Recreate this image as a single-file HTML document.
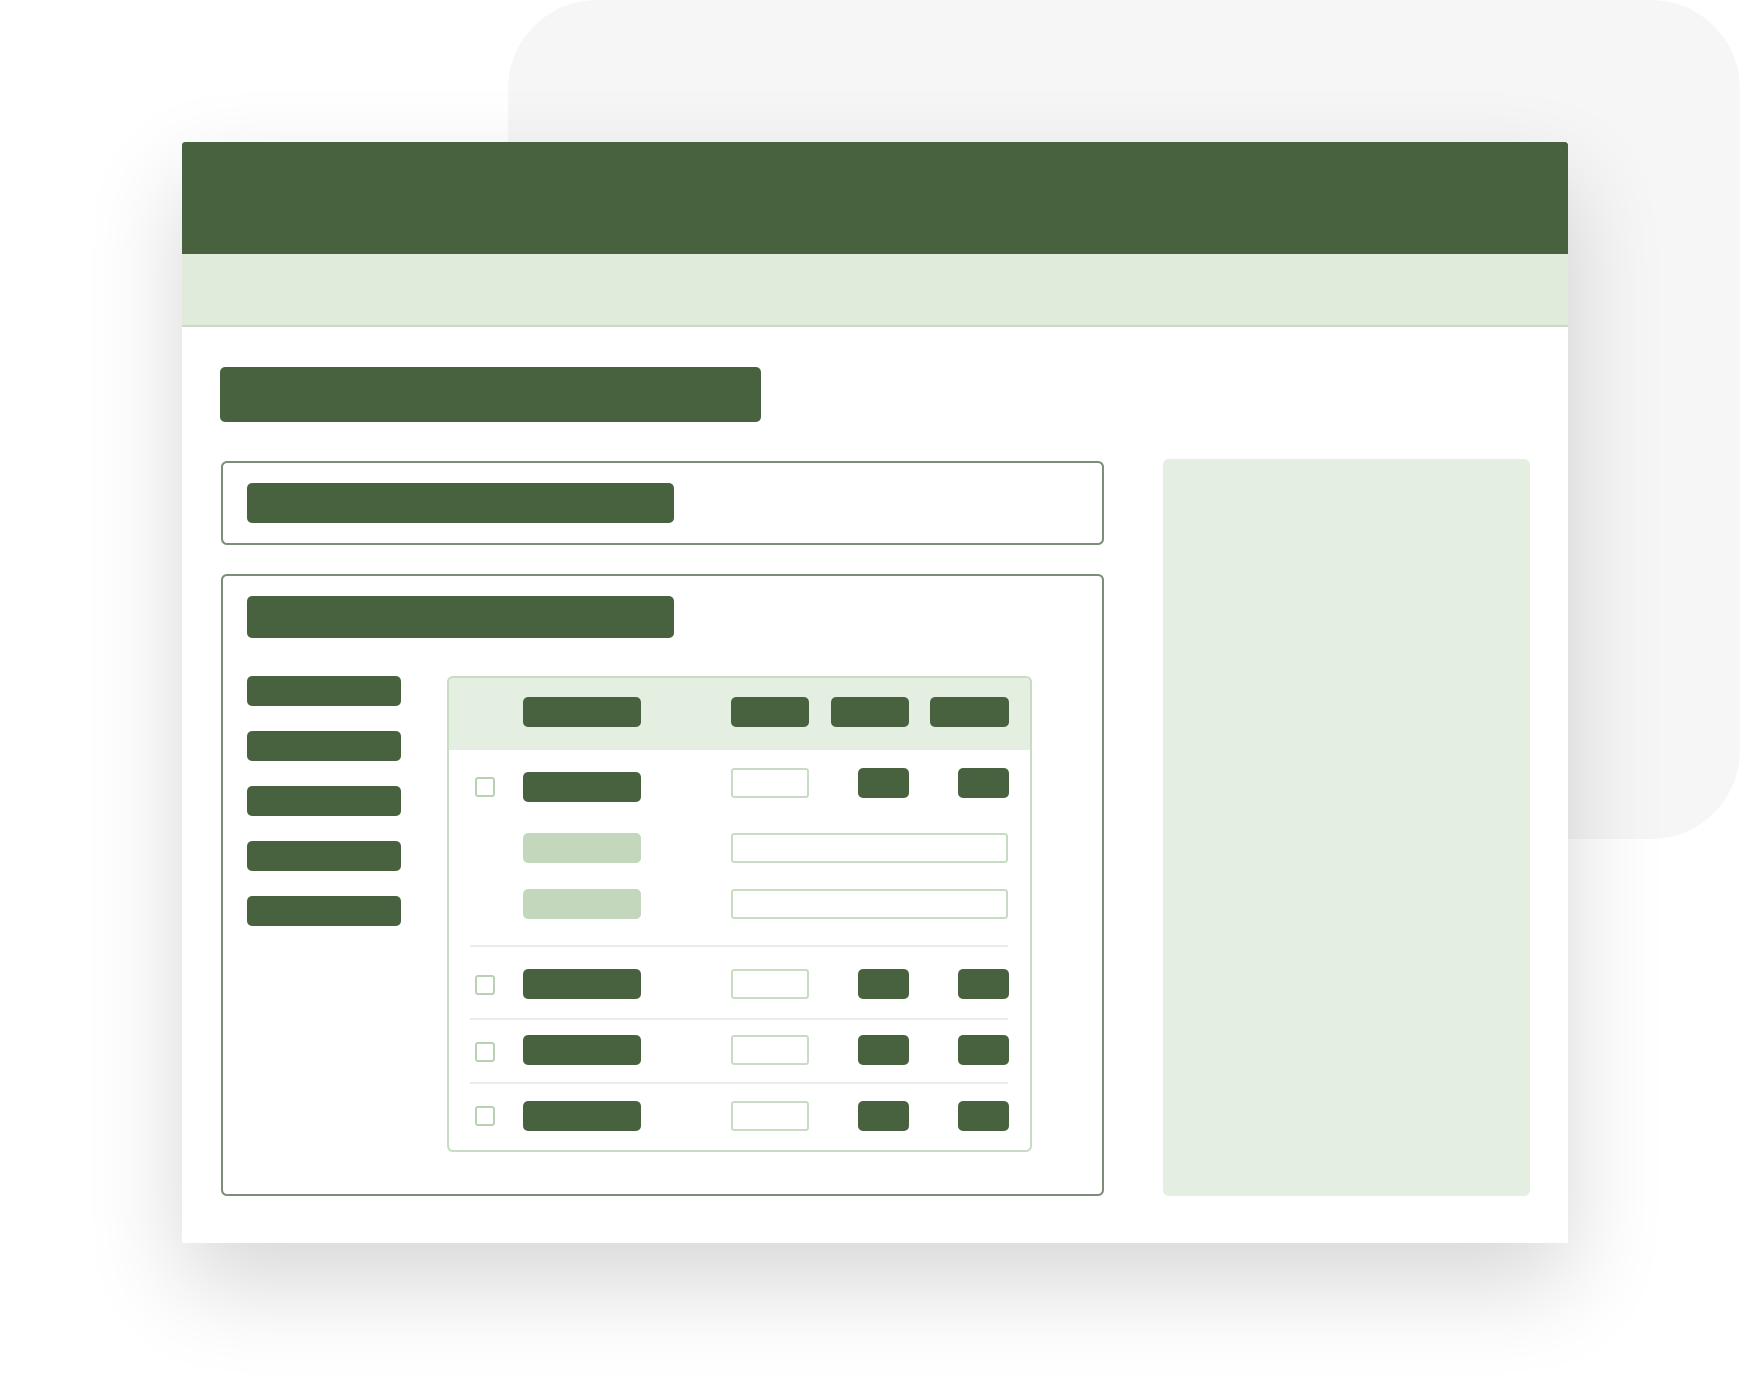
<!DOCTYPE html>
<html><head><meta charset="utf-8"><style>
*{margin:0;padding:0;box-sizing:border-box}
body{width:1740px;height:1386px;background:#fff;position:relative;overflow:hidden;font-family:"Liberation Sans",sans-serif}
div{position:absolute}
.d{background:#48613f;border-radius:5px}
.l{background:#c2d7bc;border-radius:5px}
.in{border:2px solid #c8dcc3;border-radius:3px;background:#fff}
.cb{border:2px solid #b9d0b3;border-radius:3px;width:20px;height:20px;background:#fff}
.hr{height:2px;background:#e8eee6;left:470px;width:538px}
</style></head><body>
<div style="left:508px;top:0;width:1232px;height:839px;background:#f6f6f6;border-radius:89px"></div>
<div style="left:182px;top:142px;width:1386px;height:1101px;background:#fff;box-shadow:0 40px 90px rgba(0,0,0,0.16)"></div>
<div style="left:182px;top:142px;width:1386px;height:112px;background:#48613f;border-radius:3px 3px 0 0"></div>
<div style="left:182px;top:254px;width:1386px;height:73px;background:#e0ebdc;border-bottom:2px solid #c6dbc0"></div>
<div class="d" style="left:220px;top:367px;width:541px;height:55px"></div>
<div style="left:221px;top:461px;width:883px;height:84px;border:2px solid #7d8d78;border-radius:6px"></div>
<div class="d" style="left:247px;top:483px;width:427px;height:40px"></div>
<div style="left:221px;top:574px;width:883px;height:622px;border:2px solid #7d8d78;border-radius:6px"></div>
<div class="d" style="left:247px;top:596px;width:427px;height:42px"></div>
<div class="d" style="left:247px;top:676px;width:154px;height:30px"></div>
<div class="d" style="left:247px;top:731px;width:154px;height:30px"></div>
<div class="d" style="left:247px;top:786px;width:154px;height:30px"></div>
<div class="d" style="left:247px;top:841px;width:154px;height:30px"></div>
<div class="d" style="left:247px;top:896px;width:154px;height:30px"></div>
<div style="left:447px;top:676px;width:585px;height:476px;border:2px solid #c8dcc3;border-radius:6px;overflow:hidden"><div style="left:0;top:0;width:100%;height:72px;background:#e4eee1"></div></div>
<div class="d" style="left:523px;top:697px;width:118px;height:30px"></div>
<div class="d" style="left:731px;top:697px;width:78px;height:30px"></div>
<div class="d" style="left:831px;top:697px;width:78px;height:30px"></div>
<div class="d" style="left:930px;top:697px;width:79px;height:30px"></div>
<div class="cb" style="left:475px;top:777px"></div>
<div class="d" style="left:523px;top:772px;width:118px;height:30px"></div>
<div class="in" style="left:731px;top:768px;width:78px;height:30px"></div>
<div class="d" style="left:858px;top:768px;width:51px;height:30px"></div>
<div class="d" style="left:958px;top:768px;width:51px;height:30px"></div>
<div class="l" style="left:523px;top:833px;width:118px;height:30px"></div>
<div class="in" style="left:731px;top:833px;width:277px;height:30px"></div>
<div class="l" style="left:523px;top:889px;width:118px;height:30px"></div>
<div class="in" style="left:731px;top:889px;width:277px;height:30px"></div>
<div class="hr" style="top:945px"></div>
<div class="cb" style="left:475px;top:975px"></div>
<div class="d" style="left:523px;top:969px;width:118px;height:30px"></div>
<div class="in" style="left:731px;top:969px;width:78px;height:30px"></div>
<div class="d" style="left:858px;top:969px;width:51px;height:30px"></div>
<div class="d" style="left:958px;top:969px;width:51px;height:30px"></div>
<div class="hr" style="top:1018px"></div>
<div class="cb" style="left:475px;top:1042px"></div>
<div class="d" style="left:523px;top:1035px;width:118px;height:30px"></div>
<div class="in" style="left:731px;top:1035px;width:78px;height:30px"></div>
<div class="d" style="left:858px;top:1035px;width:51px;height:30px"></div>
<div class="d" style="left:958px;top:1035px;width:51px;height:30px"></div>
<div class="hr" style="top:1082px"></div>
<div class="cb" style="left:475px;top:1106px"></div>
<div class="d" style="left:523px;top:1101px;width:118px;height:30px"></div>
<div class="in" style="left:731px;top:1101px;width:78px;height:30px"></div>
<div class="d" style="left:858px;top:1101px;width:51px;height:30px"></div>
<div class="d" style="left:958px;top:1101px;width:51px;height:30px"></div>
<div style="left:1163px;top:459px;width:367px;height:737px;background:#e4efe2;border-radius:6px"></div>
</body></html>
